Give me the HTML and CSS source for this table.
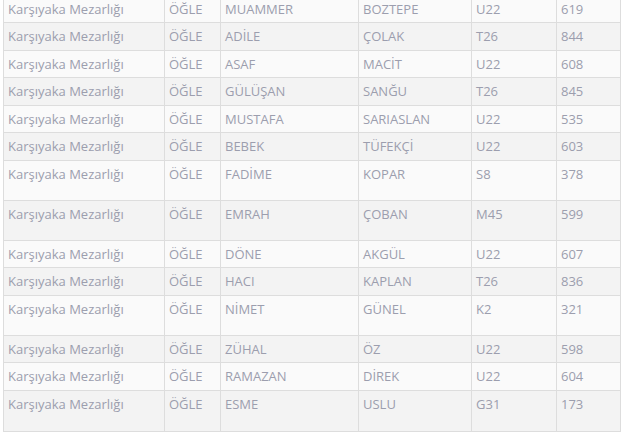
FILE: index.html
```html
<!DOCTYPE html>
<html lang="tr">
<head>
<meta charset="utf-8">
<link rel="stylesheet" href="styles.css">
</head>
<body>
<table class="grid">
  <colgroup>
    <col class="c-place"><col class="c-time"><col class="c-name"><col class="c-surname"><col class="c-block"><col class="c-no">
  </colgroup>
  <tbody>
    <tr class="row"><td>Karşıyaka Mezarlığı</td><td>ÖĞLE</td><td>MUAMMER</td><td>BOZTEPE</td><td>U22</td><td>619</td></tr>
    <tr class="row"><td>Karşıyaka Mezarlığı</td><td>ÖĞLE</td><td>ADİLE</td><td>ÇOLAK</td><td>T26</td><td>844</td></tr>
    <tr class="row"><td>Karşıyaka Mezarlığı</td><td>ÖĞLE</td><td>ASAF</td><td>MACİT</td><td>U22</td><td>608</td></tr>
    <tr class="row"><td>Karşıyaka Mezarlığı</td><td>ÖĞLE</td><td>GÜLÜŞAN</td><td>SANĞU</td><td>T26</td><td>845</td></tr>
    <tr class="row"><td>Karşıyaka Mezarlığı</td><td>ÖĞLE</td><td>MUSTAFA</td><td>SARIASLAN</td><td>U22</td><td>535</td></tr>
    <tr class="row"><td>Karşıyaka Mezarlığı</td><td>ÖĞLE</td><td>BEBEK</td><td>TÜFEKÇİ</td><td>U22</td><td>603</td></tr>
    <tr class="row tall"><td>Karşıyaka Mezarlığı</td><td>ÖĞLE</td><td>FADİME</td><td>KOPAR</td><td>S8</td><td>378</td></tr>
    <tr class="row tall"><td>Karşıyaka Mezarlığı</td><td>ÖĞLE</td><td>EMRAH</td><td>ÇOBAN</td><td>M45</td><td>599</td></tr>
    <tr class="row"><td>Karşıyaka Mezarlığı</td><td>ÖĞLE</td><td>DÖNE</td><td>AKGÜL</td><td>U22</td><td>607</td></tr>
    <tr class="row"><td>Karşıyaka Mezarlığı</td><td>ÖĞLE</td><td>HACI</td><td>KAPLAN</td><td>T26</td><td>836</td></tr>
    <tr class="row tall"><td>Karşıyaka Mezarlığı</td><td>ÖĞLE</td><td>NİMET</td><td>GÜNEL</td><td>K2</td><td>321</td></tr>
    <tr class="row"><td>Karşıyaka Mezarlığı</td><td>ÖĞLE</td><td>ZÜHAL</td><td>ÖZ</td><td>U22</td><td>598</td></tr>
    <tr class="row"><td>Karşıyaka Mezarlığı</td><td>ÖĞLE</td><td>RAMAZAN</td><td>DİREK</td><td>U22</td><td>604</td></tr>
    <tr class="row tall last"><td>Karşıyaka Mezarlığı</td><td>ÖĞLE</td><td>ESME</td><td>USLU</td><td>G31</td><td>173</td></tr>
  </tbody>
</table>
</body>
</html>
```

FILE: styles.css
```css
html, body {
  margin: 0;
  padding: 0;
  background: #ffffff;
}

body {
  font-family: "Open Sans", "Liberation Sans", sans-serif;
  font-size: 13px;
  color: #9c9eae;
  overflow: hidden;
}

.grid {
  margin: -5.5px 0 0 3px;
  width: 618px;
  table-layout: fixed;
  border-collapse: separate;
  border-spacing: 0;
  border-right: 1px solid #dddddd;
  border-bottom: 1px solid #dddddd;
}

.c-place { width: 161px; }
.c-time { width: 56px; }
.c-name { width: 138px; }
.c-surname { width: 113px; }
.c-block { width: 85px; }
.c-no { width: 64px; }

.grid td {
  border-left: 1px solid #dddddd;
  border-top: 1px solid #dddddd;
  padding: 4px 4px 0 4px;
  line-height: 18.5px;
  vertical-align: top;
  white-space: nowrap;
  overflow: hidden;
}

.row td { height: 22.5px; }
.row.tall td { height: 35px; }
.row.tall.last td { height: 36.5px; }

.row:nth-child(odd) { background: #fafafa; }
.row:nth-child(even) { background: #f3f3f3; }
```
